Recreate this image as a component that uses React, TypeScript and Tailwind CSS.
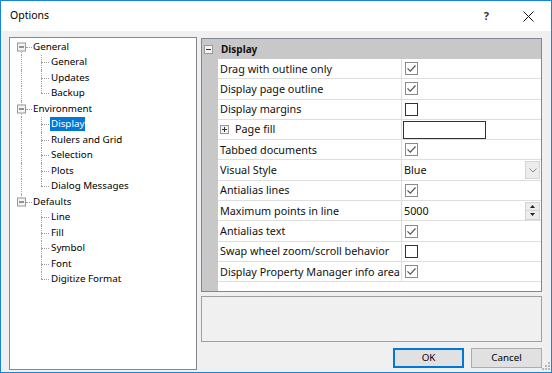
import React from 'react';

const FONT = { fontFamily: '"Noto Sans", "Liberation Sans", sans-serif' };

type Node = { label: string; children: string[] };

const tree: Node[] = [
  { label: 'General', children: ['General', 'Updates', 'Backup'] },
  { label: 'Environment', children: ['Display', 'Rulers and Grid', 'Selection', 'Plots', 'Dialog Messages'] },
  { label: 'Defaults', children: ['Line', 'Fill', 'Symbol', 'Font', 'Digitize Format'] },
];

const VLine = ({ left, top, bottom }: { left: number; top: string; bottom: string }) => (
  <span className="absolute w-0 border-l border-dotted border-[#a0a0a0]" style={{ left, top, bottom }} />
);

const HLine = ({ left, width }: { left: number; width: number }) => (
  <span className="absolute top-1/2 h-0 border-t border-dotted border-[#a0a0a0]" style={{ left, width }} />
);

const Expander = ({ minus }: { minus: boolean }) => (
  <span className="relative flex h-[9px] w-[9px] items-center justify-center border border-[#999] bg-[#f4f4f4]">
    <span className="h-px w-[5px] bg-[#333]" />
    {!minus && <span className="absolute h-[5px] w-px bg-[#333]" />}
  </span>
);

// rows of the tree with their dotted connector lines
const TreeView = () => (
  <div className="flex w-[188px] flex-col border border-[#828790] bg-white pt-px text-[9.8px] text-black">
    {tree.map((node, i) => {
      const firstRoot = i === 0;
      const lastRoot = i === tree.length - 1;
      return (
        <React.Fragment key={node.label}>
          <div className="relative flex h-[15.5px] items-center">
            {!firstRoot && <VLine left={11} top="0" bottom="50%" />}
            {!lastRoot && <VLine left={11} top="50%" bottom="0" />}
            <HLine left={16} width={6} />
            <span className="absolute left-[7px] top-1/2 -translate-y-1/2">
              <Expander minus />
            </span>
            <span className="absolute left-[23px] leading-none">{node.label}</span>
          </div>
          {node.children.map((c, j) => {
            const lastChild = j === node.children.length - 1;
            const selected = node.label === 'Environment' && c === 'Display';
            return (
              <div key={c} className="relative flex h-[15.5px] items-center">
                {!lastRoot && <VLine left={11} top="0" bottom="0" />}
                <VLine left={31} top="0" bottom={lastChild ? '50%' : '0'} />
                <HLine left={31} width={8} />
                <span
                  className={`absolute left-[40px] px-px leading-[14px] ${selected ? 'bg-[#0078d7] text-white' : ''}`}
                >
                  {c}
                </span>
              </div>
            );
          })}
        </React.Fragment>
      );
    })}
  </div>
);

const CheckBox = ({ checked }: { checked: boolean }) => (
  <span
    className={`flex h-[13px] w-[13px] items-center justify-center border bg-white ${checked ? 'border-[#8a8a8a]' : 'border-[#333]'}`}
  >
    {checked && (
      <svg width="11" height="11" viewBox="0 0 11 11">
        <path d="M1.5 5.3 L4.3 8.2 L9.5 2.5" fill="none" stroke="#555" strokeWidth="1.2" />
      </svg>
    )}
  </span>
);

type Row =
  | { label: string; kind: 'check'; checked: boolean }
  | { label: string; kind: 'fill' }
  | { label: string; kind: 'select'; text: string }
  | { label: string; kind: 'spin'; text: string };

const rows: Row[] = [
  { label: 'Drag with outline only', kind: 'check', checked: true },
  { label: 'Display page outline', kind: 'check', checked: true },
  { label: 'Display margins', kind: 'check', checked: false },
  { label: 'Page fill', kind: 'fill' },
  { label: 'Tabbed documents', kind: 'check', checked: true },
  { label: 'Visual Style', kind: 'select', text: 'Blue' },
  { label: 'Antialias lines', kind: 'check', checked: true },
  { label: 'Maximum points in line', kind: 'spin', text: '5000' },
  { label: 'Antialias text', kind: 'check', checked: true },
  { label: 'Swap wheel zoom/scroll behavior', kind: 'check', checked: false },
  { label: 'Display Property Manager info area', kind: 'check', checked: true },
];

const ValueCell = ({ row }: { row: Row }) => {
  if (row.kind === 'check') {
    return (
      <div className="flex h-full items-center pl-[3px]">
        <CheckBox checked={row.checked} />
      </div>
    );
  }
  if (row.kind === 'fill') {
    return (
      <div className="flex h-full items-center pl-px">
        <span className="h-[18px] w-[83px] border border-[#333] bg-white" />
      </div>
    );
  }
  if (row.kind === 'select') {
    return (
      <div className="flex h-full items-center justify-between pl-[2px] pr-px">
        <span>{row.text}</span>
        <span className="flex h-[18px] w-[15px] items-center justify-center border border-[#d4d4d4] bg-[#ececec]">
          <svg width="8" height="5" viewBox="0 0 8 5">
            <path d="M0.5 0.5 L4 4 L7.5 0.5" fill="none" stroke="#888" strokeWidth="1" />
          </svg>
        </span>
      </div>
    );
  }
  return (
    <div className="flex h-full items-center justify-between pl-[2px] pr-px">
      <span>{row.text}</span>
      <span className="flex h-[18px] w-[15px] flex-col border border-[#d4d4d4] bg-[#ececec]">
        <span className="flex flex-1 items-center justify-center border-b border-[#d4d4d4]">
          <svg width="5" height="3" viewBox="0 0 5 3">
            <path d="M0 3 L2.5 0 L5 3 Z" fill="#222" />
          </svg>
        </span>
        <span className="flex flex-1 items-center justify-center">
          <svg width="5" height="3" viewBox="0 0 5 3">
            <path d="M0 0 L2.5 3 L5 0 Z" fill="#222" />
          </svg>
        </span>
      </span>
    </div>
  );
};

const PropertyGrid = () => (
  <div className="flex h-[254px] flex-col border border-[#828790] bg-white text-[10.8px] text-[#111]">
    <div className="flex h-[20px] items-center bg-[#c8c8c8]">
      <span className="ml-[2px] w-[17px]">
        <Expander minus />
      </span>
      <span className="text-[10px] font-bold">Display</span>
    </div>
    <div className="flex flex-1">
      <div className="w-[16px] bg-[#c8c8c8]" />
      <div className="flex flex-1 flex-col">
        {rows.map((r) => (
          <div key={r.label} className="flex h-[20.3px] border-b border-[#dedede]">
            <div className="flex w-[184px] items-center gap-[6px] overflow-hidden border-r border-[#dedede] pl-[2px] whitespace-nowrap">
              {r.kind === 'fill' && <Expander minus={false} />}
              <span>{r.label}</span>
            </div>
            <div className="flex-1">
              <ValueCell row={r} />
            </div>
          </div>
        ))}
      </div>
    </div>
  </div>
);

export default function App() {
  return (
    <div style={FONT} className="flex h-[373px] w-[552px] flex-col border border-[#1883d7] bg-[#f0f0f0] text-[9.8px]">
      <div className="flex h-[30px] items-center bg-white pl-[9px]">
        <span className="flex-1 text-[10.5px] text-black">Options</span>
        <span className="mr-[34px] text-[11px] font-bold text-[#333]">?</span>
        <svg className="mr-[17px]" width="11" height="11" viewBox="0 0 11 11">
          <path d="M0.5 0.5 L10.5 10.5 M10.5 0.5 L0.5 10.5" stroke="#111" strokeWidth="1" />
        </svg>
      </div>
      <div className="flex flex-1 gap-[4px] pb-[2px] pl-[8px] pt-[6px]">
        <TreeView />
        <div className="flex w-[341px] flex-col pt-px">
          <PropertyGrid />
          <div className="mt-[4px] h-[46px] border border-[#a0a0a0] bg-[#f0f0f0]" />
          <div className="mt-[6px] flex justify-end gap-[7px]">
            <button className="h-[20px] w-[71px] border-2 border-[#0078d7] bg-[#e1e1e1] text-black">OK</button>
            <button className="h-[20px] w-[71px] border border-[#adadad] bg-[#e1e1e1] text-black">Cancel</button>
          </div>
        </div>
        <div className="relative flex-1">
          <svg className="absolute bottom-0 right-px" width="8" height="8" viewBox="0 0 8 8">
            <g fill="#b8b8b8">
              <rect x="6" y="0" width="2" height="2" />
              <rect x="3" y="3" width="2" height="2" />
              <rect x="6" y="3" width="2" height="2" />
              <rect x="0" y="6" width="2" height="2" />
              <rect x="3" y="6" width="2" height="2" />
              <rect x="6" y="6" width="2" height="2" />
            </g>
          </svg>
        </div>
      </div>
    </div>
  );
}
